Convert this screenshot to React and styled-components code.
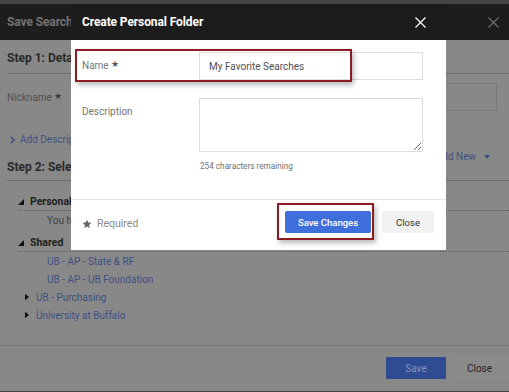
import React from "react";
import styled, { createGlobalStyle } from "styled-components";

const Global = createGlobalStyle`
  html, body { margin: 0; padding: 0; }
  body {
    width: 509px; height: 392px; overflow: hidden;
    background: #454545;
    font-family: Roboto, "Liberation Sans", sans-serif;
  }
  * { box-sizing: border-box; }
`;

const Page = styled.div`
  position: relative;
  width: 509px;
  height: 392px;
  padding-top: 4px;
`;

/* ---------- dimmed background dialog ---------- */
const BackDialog = styled.div`
  height: 387px;
  background: #888888;
  display: flex;
  flex-direction: column;
`;

const DarkHeader = styled.div`
  height: 36px;
  flex: none;
  background: ${(p) => p.$bg};
  display: flex;
  align-items: center;
  justify-content: space-between;
  padding: ${(p) => p.$pad};
`;

const HeaderTitle = styled.div`
  font-size: 12px;
  font-weight: 700;
  color: ${(p) => p.$color};
  letter-spacing: -0.1px;
`;

const CloseX = ({ color }) => (
  <svg width="11" height="11" viewBox="0 0 11 11">
    <path d="M0.5 0.5 L10.5 10.5 M10.5 0.5 L0.5 10.5" stroke={color} strokeWidth="1.2" fill="none" />
  </svg>
);

const BackBody = styled.div`
  flex: 1;
  padding-left: 7px;
`;

const StepHeader = styled.div`
  display: flex;
  justify-content: space-between;
  align-items: flex-end;
  margin-top: ${(p) => p.$mt}px;
  padding-bottom: ${(p) => p.$pb}px;
  border-bottom: 1px solid #6d6d6d;
`;

const StepTitle = styled.div`
  font-size: 12px;
  font-weight: 700;
  line-height: 16px;
  color: #2a2a2a;
`;

const AddNew = styled.div`
  font-size: 10px;
  line-height: 16px;
  color: #3f5183;
  margin-bottom: 10px;
  margin-right: 19px;
  display: flex;
  align-items: center;
  gap: 8px;
`;

const NickRow = styled.div`
  display: flex;
  align-items: center;
  justify-content: space-between;
  margin-top: 9px;
  height: 28px;
  padding-right: 12px;
`;

const BackLabel = styled.div`
  font-size: 10px;
  color: #505050;
`;

const Star = styled.span`
  color: ${(p) => p.$color || "#3a3a3a"};
  font-size: 9px;
  margin-left: 2px;
  position: relative;
  top: -2px;
`;

const BackInput = styled.div`
  width: 300px;
  height: 28px;
  border: 1px solid #787878;
`;

const BackLink = styled.div`
  margin-top: 21px;
  margin-left: 3px;
  font-size: 10px;
  line-height: 16px;
  color: #3f5183;
  display: flex;
  align-items: center;
  gap: 5px;
`;

const Tree = styled.div`
  margin-top: 13px;
`;

const GroupHeader = styled.div`
  display: flex;
  align-items: center;
  margin-top: ${(p) => p.$mt || 0}px;
  margin-left: 11px;
  height: 17px;
  padding-bottom: 1px;
  border-bottom: 1px dotted #5e5e5e;
  font-size: 10.5px;
  font-weight: 700;
  color: #1e1e1e;
  gap: 6px;
`;

const TreeItem = styled.div`
  display: flex;
  align-items: center;
  height: 18px;
  padding-left: 18px;
  font-size: 10px;
  color: ${(p) => (p.$muted ? "#404040" : "#3f5183")};
  gap: 7px;
`;

const Caret = styled.span`
  display: inline-flex;
  width: 4px;
  margin-left: ${(p) => (p.$none ? 11 : 0)}px;
`;

const ExpandedTri = () => (
  <svg width="6" height="6" viewBox="0 0 6 6">
    <polygon points="6,0 6,6 0,6" fill="#111" />
  </svg>
);

const CollapsedTri = () => (
  <svg width="5" height="8" viewBox="0 0 5 8">
    <polygon points="0,0 5,4 0,8" fill="#111" />
  </svg>
);

const BackFooter = styled.div`
  height: 46px;
  flex: none;
  border-top: 1px solid #777;
  display: flex;
  justify-content: flex-end;
  gap: 4px;
  padding-top: 11px;
`;

const BackBtn = styled.div`
  width: ${(p) => p.$w}px;
  height: 22px;
  display: flex;
  align-items: center;
  justify-content: center;
  font-size: 10px;
  background: ${(p) => (p.$primary ? "#2f4b93" : "#8a8a8a")};
  color: ${(p) => (p.$primary ? "#8595bd" : "#262626")};
  border-radius: 1px;
`;

/* ---------- foreground modal ---------- */
const Modal = styled.div`
  position: absolute;
  left: 71px;
  top: 4px;
  width: 375px;
  height: 246px;
  background: #fff;
  display: flex;
  flex-direction: column;
`;

const ModalBody = styled.div`
  padding: 12px 23px 28px 11px;
  border-bottom: 1px solid #e6e6e6;
`;

const FormRow = styled.div`
  display: grid;
  grid-template-columns: 117px 1fr;
  align-items: ${(p) => (p.$top ? "start" : "center")};
  margin-top: ${(p) => p.$mt || 0}px;
`;

const Label = styled.label`
  font-size: 10px;
  color: #767676;
  padding-top: ${(p) => p.$pt || 0}px;
  line-height: 12px;
`;

const TextInput = styled.input`
  height: 28px;
  width: 224px;
  border: 1px solid #dcdcdc;
  padding: 0 9px;
  font-family: Roboto, "Liberation Sans", sans-serif;
  font-size: 10px;
  color: #505050;
  outline: none;
`;

const TextArea = styled.textarea`
  display: block;
  height: 54px;
  width: 224px;
  border: 1px solid #dcdcdc;
  padding: 4px 9px;
  font-family: Roboto, "Liberation Sans", sans-serif;
  font-size: 10px;
  outline: none;
  margin: 0;
`;

const Helper = styled.div`
  margin: 9px 0 0 118px;
  font-size: 8.2px;
  line-height: 10px;
  color: #707070;
`;

const ModalFooter = styled.div`
  flex: 1;
  display: flex;
  align-items: flex-start;
  justify-content: space-between;
  padding: 11px 12px 0 11px;
`;

const Required = styled.div`
  margin-top: 6px;
  display: flex;
  align-items: center;
  gap: 5px;
  font-size: 10.5px;
  color: #8a8a8a;
`;

const Buttons = styled.div`
  display: flex;
  gap: 11px;
`;

const Button = styled.button`
  height: 22px;
  width: ${(p) => p.$w}px;
  border: none;
  border-radius: 2px;
  font-family: Roboto, "Liberation Sans", sans-serif;
  font-size: 9.5px;
  font-weight: ${(p) => (p.$primary ? 500 : 400)};
  background: ${(p) => (p.$primary ? "#3e6fdb" : "#f1f1f1")};
  color: ${(p) => (p.$primary ? "#fff" : "#333")};
  padding: 0;
`;

const Highlight = styled.div`
  position: absolute;
  left: ${(p) => p.$x}px;
  top: ${(p) => p.$y}px;
  width: ${(p) => p.$w}px;
  height: ${(p) => p.$h}px;
  border: 2px solid #8c1c22;
  box-shadow: 2px 3px 5px rgba(0, 0, 0, 0.28);
  pointer-events: none;
`;

const Chevron = () => (
  <svg width="5" height="8" viewBox="0 0 5 8">
    <path d="M0.8 0.8 L4 4 L0.8 7.2" stroke="#3f5183" strokeWidth="1.5" fill="none" />
  </svg>
);

const DownCaret = () => (
  <svg width="6" height="4" viewBox="0 0 6 4">
    <polygon points="0,0 6,0 3,4" fill="#3f5183" />
  </svg>
);

const StarIcon = () => (
  <svg width="10" height="10" viewBox="0 0 24 24">
    <polygon points="12,1.5 15.1,8.3 22.5,9.1 17,14.1 18.5,21.5 12,17.8 5.5,21.5 7,14.1 1.5,9.1 8.9,8.3" fill="#666" />
  </svg>
);

export default function App() {
  return (
    <Page>
      <Global />
      <BackDialog>
        <DarkHeader $bg="#1d1d1d" $pad="0 10px 0 7px">
          <HeaderTitle $color="#737373">Save Search</HeaderTitle>
          <CloseX color="#6c6c6c" />
        </DarkHeader>
        <BackBody>
          <StepHeader $mt={10} $pb={7}>
            <StepTitle>Step 1: Details</StepTitle>
          </StepHeader>
          <NickRow>
            <BackLabel>
              Nickname<Star>★</Star>
            </BackLabel>
            <BackInput />
          </NickRow>
          <BackLink>
            <Chevron />
            Add Description
          </BackLink>
          <StepHeader $mt={1} $pb={5}>
            <StepTitle>Step 2: Select Folder</StepTitle>
            <AddNew>
              Add New
              <DownCaret />
            </AddNew>
          </StepHeader>
          <Tree>
            <GroupHeader>
              <ExpandedTri />
              Personal
            </GroupHeader>
            <TreeItem $muted>
              <Caret $none />
              You have no
            </TreeItem>
            <GroupHeader $mt={6}>
              <ExpandedTri />
              Shared
            </GroupHeader>
            <TreeItem>
              <Caret $none />
              UB - AP - State &amp; RF
            </TreeItem>
            <TreeItem>
              <Caret $none />
              UB - AP - UB Foundation
            </TreeItem>
            <TreeItem>
              <Caret>
                <CollapsedTri />
              </Caret>
              UB - Purchasing
            </TreeItem>
            <TreeItem>
              <Caret>
                <CollapsedTri />
              </Caret>
              University at Buffalo
            </TreeItem>
          </Tree>
        </BackBody>
        <BackFooter>
          <BackBtn $w={60} $primary>
            Save
          </BackBtn>
          <BackBtn $w={59}>Close</BackBtn>
        </BackFooter>
      </BackDialog>

      <Modal>
        <DarkHeader $bg="#1c1c1c" $pad="0 20px 0 11px">
          <HeaderTitle $color="#ffffff">Create Personal Folder</HeaderTitle>
          <CloseX color="#ffffff" />
        </DarkHeader>
        <ModalBody>
          <FormRow>
            <Label>
              Name<Star $color="#555">★</Star>
            </Label>
            <TextInput defaultValue="My Favorite Searches" />
          </FormRow>
          <FormRow $top $mt={18}>
            <Label $pt={8}>Description</Label>
            <TextArea />
          </FormRow>
          <Helper>254 characters remaining</Helper>
        </ModalBody>
        <ModalFooter>
          <Required>
            <StarIcon />
            Required
          </Required>
          <Buttons>
            <Button $primary $w={86}>
              Save Changes
            </Button>
            <Button $w={52}>Close</Button>
          </Buttons>
        </ModalFooter>
        <Highlight $x={4} $y={45} $w={277} $h={33} />
        <Highlight $x={206} $y={199} $w={97} $h={37} />
      </Modal>
    </Page>
  );
}
